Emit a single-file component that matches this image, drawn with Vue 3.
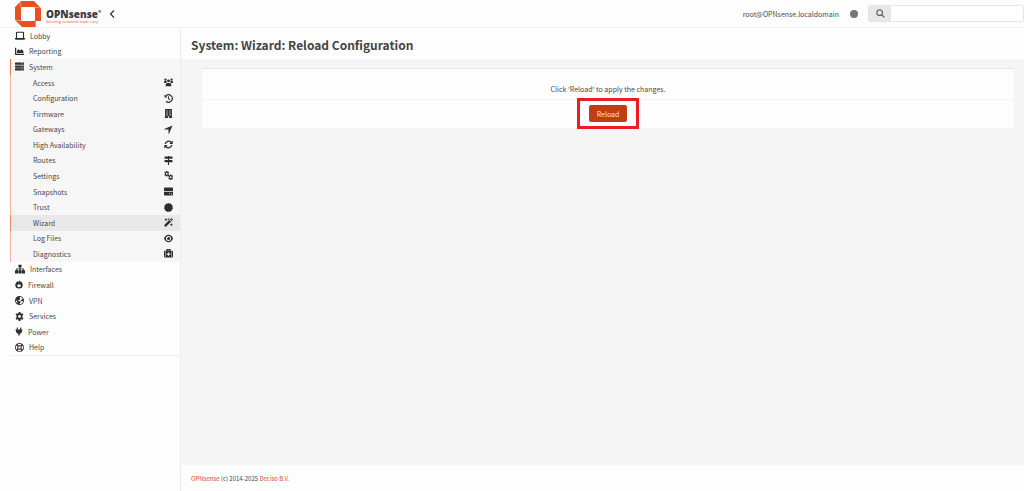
<script setup>
const icons = {
  laptop: 'M3 1h10q1.500 0 1.500 1.500V11H16v1.500q0 1.500-1.500 1.500h-13Q0 14 0 12.500V11h1.500V2.500Q1.500 1 3 1zM3.300 2.800V11h9.400V2.800z',
  chart: 'M0 1.500h2.200v10.300H16V14H1.200Q0 14 0 12.800zM3.500 10.800V7l3-3.500 2.500 3 2.500-2.500 3.500 3v3.800z',
  server: 'M1 1h14q1 0 1 1v2q0 1-1 1H1Q0 5 0 4V2q0-1 1-1zM1 6h14q1 0 1 1v2q0 1-1 1H1q-1 0-1-1V7q0-1 1-1zM1 11h14q1 0 1 1v2q0 1-1 1H1q-1 0-1-1v-2q0-1 1-1zM11 2.500v1h1v-1zM13 2.500v1h1v-1zM11 7.500v1h1v-1zM13 7.500v1h1v-1zM11 12.500v1h1v-1zM13 12.500v1h1v-1z',
  users: 'M8 2.500a2.600 2.600 0 1 1 0 5.200 2.600 2.600 0 0 1 0-5.200zM2.500 1a2 2 0 1 1 0 4 2 2 0 0 1 0-4zM13.500 1a2 2 0 1 1 0 4 2 2 0 0 1 0-4zM0 9V7.200q0-1.700 1.500-1.700h2Q5 5.500 5 7L3.800 9zM16 9V7.200q0-1.700-1.500-1.700h-2Q11 5.500 11 7l1.200 2zM3 14.500v-2.500q0-3.300 3.200-3.300h3.600q3.200 0 3.200 3.300v2.500z',
  history: 'M1 1l1.800 1.800A7.500 7.500 0 1 1 3 13.600l1.400-1.500A5.500 5.500 0 1 0 4.200 4.200L6 6H1zM7.200 4h1.700v3.800l2.500 1.800-1 1.500-3.200-2.400z',
  building: 'M2 0h12v15h1v1H9v-3H7v3H1v-1h1zM4.500 2.500v2h2v-2zM9.500 2.500v2h2v-2zM4.500 6v2h2V6zM9.500 6v2h2V6zM4.500 9.500v2h2v-2zM9.500 9.500v2h2v-2z',
  arrow: 'M15 1L9 15.500H8V8H.5V7z',
  refresh: 'M15.500 1v6h-6l2.200-2.200A5 5 0 0 0 3.200 7H1a7.200 7.200 0 0 1 12.200-3.800zM.5 15V9h6l-2.200 2.200A5 5 0 0 0 12.800 9H15a7.200 7.200 0 0 1-12.200 3.800z',
  signs: 'M7 0h2v1h5l2 2-2 2H9v2h6v4H9v5H7v-5H2L0 9l2-2h5V5H1V1h6z',
  drives: 'M1.500 1h13q1.500 0 1.500 1.500V7H0V2.500Q0 1 1.500 1zM0 8.500h16v5q0 1.500-1.500 1.500h-13Q0 15 0 13.500zM9.500 11v1.800H11V11zM12.500 11v1.800H14V11z',
  badge: 'M8 0l2 1.300 2.400-.2 1 2.200 2 1.400-.5 2.400L16 9.200l-1.500 1.900-.3 2.400-2.300.6L10.100 16 8 14.900 5.900 16l-1.800-1.900-2.300-.6-.3-2.400L0 9.200l1.100-2.100L.6 4.700l2-1.400 1-2.200 2.400.2z',
  wand: 'M13 0l3 3L3 16l-3-3zM12.800 2L10 4.800 11.200 6 14 3.200zM3.500 0l1 2.200 2.200 1-2.200 1-1 2.200-1-2.200-2.200-1 2.200-1zM13 9l.9 2.100 2.100.9-2.100.9L13 15l-.9-2.100L10 12l2.100-.9zM8 0l.6 1.400L10 2l-1.400.6L8 4l-.6-1.400L6 2l1.400-.6z',
  eye: 'M8 1.500q5.500 0 8 6.500-2.500 6.500-8 6.500T0 8Q2.500 1.500 8 1.500zM8 3.500a4.500 4.500 0 1 0 0 9 4.500 4.500 0 0 0 0-9zM8 5.200a2.800 2.800 0 1 1-2.700 2q1.700.8 2-1.800z',
  kit: 'M4 3V1.500Q4 0 5.500 0h5Q12 0 12 1.500V3h2.500Q16 3 16 4.500v9q0 1.500-1.500 1.500h-13Q0 15 0 13.500v-9Q0 3 1.500 3zM6 2v1h4V2zM2.300 4v10h.9V4zM12.800 4v10h.9V4zM7 6v2H5v2h2v2h2v-2h2V8H9V6z',
  sitemap: 'M5.500 1h5v4H9v2h5v3h2v5h-5v-5h1V8.500H9V10h1.500v5h-5v-5H7V8.500H4V10h1v5H0v-5h2V7h5V5H5.500z',
  flame: 'M8 1.500q.5-1 1-1.500 2 1.500 2.300 3.200L12.500 2Q15.500 5 15.500 9A7.500 7 0 0 1 .5 9Q.5 5 5 1q.5 2 1 2.500zM8 6.500Q6.500 8 4.500 9.500q-.5 4 3.500 4t3.800-4L10.500 8 9.500 9z',
  globe: 'M8 0a8 8 0 1 1 0 16A8 8 0 0 1 8 0zM9.500 1.500L8 4l1.500 1L8 7H6v2h3l1 1.500L8.500 13l-.5 1.800q3 0 5-2.500L14.500 9l-3 .5L10 8l1.500-2L14 5.500Q12.500 2.500 9.500 1.500zM2 6l-.5 2q0 3 2.500 5l.5-2.500L2.500 8.500z',
  gear: 'M6.500 0h3l.5 2.300 1.300.7 2.200-.8L15 4.800l-1.700 1.600v3.200l1.700 1.600-1.500 2.600-2.200-.8-1.300.7-.5 2.300h-3L6 13.700 4.700 13l-2.200.8L1 11.200l1.700-1.600V6.400L1 4.800l1.500-2.600 2.200.8L6 2.300zM8 5.500a2.500 2.500 0 1 0 0 5 2.500 2.500 0 0 0 0-5z',
  plug: 'M3.500 0h2.300v4h4.400V0h2.300v4H15v2h-1v2q0 3.500-4.500 4.300V16h-3v-3.700Q2 11.500 2 8V6H1V4h2.500z',
  ring: 'M8 0a8 8 0 1 1 0 16A8 8 0 0 1 8 0zM8 1.400a6.600 6.600 0 0 0-3.400 1l1.800 2a4 4 0 0 1 3.200 0l1.800-2a6.600 6.600 0 0 0-3.400-1zM2.400 4.600a6.600 6.600 0 0 0 0 6.800l2-1.800a4 4 0 0 1 0-3.200zM13.600 4.600l-2 1.800a4 4 0 0 1 0 3.200l2 1.800a6.600 6.600 0 0 0 0-6.800zM8 5.800a2.200 2.200 0 1 0 0 4.400 2.200 2.200 0 0 0 0-4.400zM4.600 13.600a6.600 6.600 0 0 0 6.800 0l-1.800-2a4 4 0 0 1-3.200 0z',
  gears: 'M3.700 0h2.200l.4 1.700 1.500-.6L9 3 7.800 4.300v1.200L9 6.800 7.800 8.700l-1.500-.6-.4 1.700H3.700l-.4-1.700-1.500.6L.6 6.800l1.200-1.300V4.300L.6 3l1.200-1.900 1.500.6zM4.800 3.300a1.600 1.600 0 1 0 0 3.200 1.600 1.600 0 0 0 0-3.200zM10.700 6.200h2.200l.4 1.700 1.500-.6L16 9.200l-1.200 1.300v1.200L16 13l-1.200 1.900-1.500-.6-.4 1.700h-2.200l-.4-1.700-1.500.6L7.600 13l1.200-1.300v-1.200L7.600 9.200l1.200-1.900 1.500.6zM11.800 9.500a1.600 1.600 0 1 0 0 3.200 1.600 1.600 0 0 0 0-3.200z',
}
const menu = [
  { name: 'Lobby', icon: 'laptop', wide: true },
  { name: 'Reporting', icon: 'chart' },
  {
    name: 'System',
    icon: 'server',
    children: [
      ['Access', 'users'], ['Configuration', 'history'], ['Firmware', 'building'],
      ['Gateways', 'arrow'], ['High Availability', 'refresh'], ['Routes', 'signs'],
      ['Settings', 'gears'], ['Snapshots', 'drives'], ['Trust', 'badge'],
      ['Wizard', 'wand'], ['Log Files', 'eye'], ['Diagnostics', 'kit'],
    ],
  },
  { name: 'Interfaces', icon: 'sitemap', wide: true },
  { name: 'Firewall', icon: 'flame', narrow: true },
  { name: 'VPN', icon: 'globe' },
  { name: 'Services', icon: 'gear' },
  { name: 'Power', icon: 'plug', narrow: true },
  { name: 'Help', icon: 'ring' },
]
</script>

<template>
  <div class="page">
    <header class="topbar">
      <a class="brand" href="#" aria-label="OPNsense">
        <svg class="mark" viewBox="0 0 26 26" aria-hidden="true">
          <path fill="#e8501f" fill-rule="evenodd" d="M6 0h13l7 7v13h-5v6H7l-7-7V6zM7 6L6 7v12l1 1h12l1-1V7l-1-1z" />
          <path fill="none" stroke="#fff" stroke-width=".4" d="M6 7L5 1M19 6l7 1M20 19l1 7M7 20l-7-1" />
        </svg>
        <span class="words">
          <span class="name">OPNsense<span class="reg">®</span></span>
          <span class="tagline">Securing networks made easy</span>
        </span>
      </a>
      <button class="collapse" type="button" aria-label="Toggle sidebar">
        <svg viewBox="0 0 8 10" aria-hidden="true"><path d="M6 1.500L2.500 5 6 8.500" fill="none" stroke="currentColor" stroke-width="1.200" /></svg>
      </button>
      <div class="account">
        <span>root@OPNsense.localdomain</span>
        <span class="status"></span>
      </div>
      <form class="search" @submit.prevent>
        <label for="search" aria-label="Search">
          <svg viewBox="0 0 16 16" aria-hidden="true"><path d="M6.500 1.500a5 5 0 1 1 0 10 5 5 0 0 1 0-10zM10 10l5 5" fill="none" stroke="currentColor" stroke-width="2.200" /></svg>
        </label>
        <input id="search" type="text">
      </form>
    </header>

    <div class="body">
      <aside>
        <nav>
          <ul class="menu">
            <li v-for="item in menu" :key="item.name" :class="{ open: item.children }">
              <a href="#" class="entry">
                <svg class="icon" :class="{ wide: item.wide, narrow: item.narrow }" viewBox="0 0 16 16" aria-hidden="true"><path :d="icons[item.icon]" fill-rule="evenodd" /></svg>
                <span>{{ item.name }}</span>
              </a>
              <ul v-if="item.children" class="sub">
                <li v-for="[name, icon] in item.children" :key="name">
                  <a href="#" class="entry child" :class="{ active: name === 'Wizard' }">
                    <span>{{ name }}</span>
                    <svg class="icon" viewBox="0 0 16 16" aria-hidden="true"><path :d="icons[icon]" fill-rule="evenodd" /></svg>
                  </a>
                </li>
              </ul>
            </li>
          </ul>
        </nav>
      </aside>

      <div class="content">
        <div class="title"><h1>System: Wizard: Reload Configuration</h1></div>
        <main>
          <form class="panel" @submit.prevent>
            <p>Click 'Reload' to apply the changes.</p>
            <div class="actions">
              <div class="highlight"><button type="submit">Reload</button></div>
            </div>
          </form>
        </main>
        <footer><a href="#">OPNsense</a> (c) 2014-2025 <a href="#">Deciso B.V.</a></footer>
      </div>
    </div>
  </div>
</template>

<style>
body { background: #fdfdfd; }
</style>

<style scoped>
* { box-sizing: border-box; }
.page {
  display: flex;
  flex-direction: column;
  min-height: 100vh;
  font: 7px/12px "Noto Sans CJK SC", "Noto Sans", sans-serif;
  color: #484848;
}
a { color: inherit; text-decoration: none; }
ul { margin: 0; padding: 0; list-style: none; }
.topbar {
  display: flex;
  align-items: center;
  height: 28px;
  padding-left: 15px;
  border-bottom: 1px solid #f1f1f1;
}
.brand { display: flex; align-items: center; gap: 5px; }
.mark { width: 26px; height: 26px; }
.words { display: flex; flex-direction: column; width: 58px; padding-top: 4px; white-space: nowrap; }
.name { display: flex; font: 800 10px/12px "Open Sans", sans-serif; color: #3c3c3c; }
.reg { font-size: 4px; line-height: 8px; }
.tagline { font: 4px/4px Lato, sans-serif; color: #ee6b45; }
button { font: inherit; border: 0; padding: 0; cursor: pointer; }
.collapse { display: flex; margin-left: 4px; background: none; color: #333; }
.collapse svg { width: 8px; height: 10px; }
.account { display: flex; align-items: center; gap: 11px; margin-left: auto; }
.status { width: 8px; height: 8px; border-radius: 50%; background: #777; }
.search { display: flex; width: 156px; height: 17px; margin-left: 10px; border: 1px solid #e5e5e5; border-radius: 2px; }
.search label { display: flex; align-items: center; justify-content: center; width: 22px; background: #e8e8e8; color: #666; }
.search svg { width: 9px; height: 9px; }
.search input { flex: 1; min-width: 0; border: 0; padding: 0 4px; font: inherit; background: #fff; outline: none; }
.body { display: flex; flex: 1; }
aside { width: 181px; padding-left: 10px; border-right: 1px solid #e9ebee; }
.menu { display: flex; flex-direction: column; min-height: 328px; border-bottom: 1px solid #efefef; }
.menu > li { flex: 1; display: flex; flex-direction: column; }
.menu > .open { flex: 13; background: #f6f6f6; }
.entry { display: flex; flex: 1; align-items: center; gap: 5px; padding-left: 5px; }
.open > .entry { border-left: 1px solid #e8785c; padding-left: 4px; }
.icon { width: 9px; height: 9px; fill: #2e2e2e; }
.icon.wide { width: 10px; height: 10px; }
.icon.narrow { width: 8px; }
.sub { flex: 12; display: flex; flex-direction: column; border-left: 1px solid #f3b9a6; }
.sub li { flex: 1; display: flex; }
.child { justify-content: space-between; padding: 0 7px 0 22px; }
.child.active { margin-left: -1px; padding-left: 22px; border-left: 1px solid #e08672; background: #e8e8e8; }
.content { display: flex; flex: 1; flex-direction: column; }
.title { display: flex; align-items: center; height: 31px; padding: 3px 10px 0; }
h1 { margin: 0; font-size: 12px; line-height: 18px; font-weight: 600; color: #444; }
main { flex: 1; padding: 9px 10px 0 21px; background: #f5f5f5; }
.panel { border-top: 1px solid #e6e6e6; background: #fdfdfd; text-align: center; }
.panel p { margin: 0; padding: 14px 0 4px; border-bottom: 1px solid #f3f3f3; }
.actions { display: flex; justify-content: center; }
.highlight { margin: -2px 0 -1px; padding: 4px 9px; border: 3px solid #ed1c24; }
.highlight button { display: block; width: 38px; height: 17px; border-radius: 2px; background: #c03e14; color: #fbe5dd; }
footer { height: 26px; padding: 8px 10px 0; font-size: 6px; line-height: 12px; }
footer a { color: #d3512d; }
</style>
